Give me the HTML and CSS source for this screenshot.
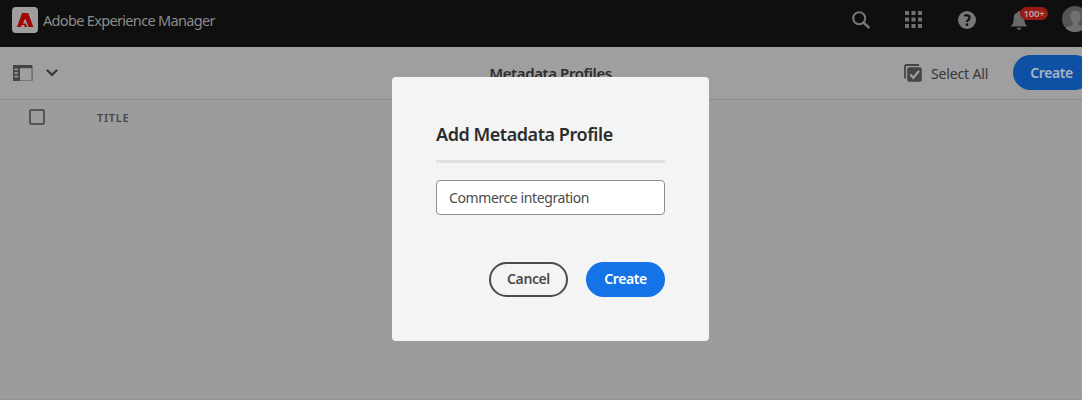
FILE: index.html
```html
<!DOCTYPE html>
<html lang="en">
<head>
<meta charset="utf-8">
<title>Metadata Profiles</title>
<link rel="stylesheet" href="styles.css">
</head>
<body>
<header class="shell">
  <div class="brand">
    <svg class="logo" width="26" height="26" viewBox="0 0 26 26"><rect width="26" height="26" rx="4" fill="#9e9e9e"/><path d="M10 6h6.200L21.400 20h-4c-.5 0-.8-.2-1-.6L13.100 11.400 11 16.500h2.300c.3 0 .5.100.6.400l1.300 3.100h-2.400l-.9-2H9.800l-.8 2H5z" fill="#a20600"/></svg>
    <span class="brand-name">Adobe Experience Manager</span>
  </div>
  <div class="shell-icons">
    <svg width="18" height="18" viewBox="0 0 18 18" fill="none" stroke="#777"><circle cx="7.200" cy="7.200" r="6" stroke-width="2"/><path d="M11.600 11.600L16.500 16.300" stroke-width="2.600" stroke-linecap="round"/></svg>
    <svg class="apps" width="18" height="18" viewBox="0 0 18 18" fill="#707070"><path d="M0 0h4v4H0zM6.500 0h4v4h-4zM13 0h4v4h-4zM0 6.500h4v4H0zM6.500 6.500h4v4h-4zM13 6.500h4v4h-4zM0 13h4v4H0zM6.500 13h4v4h-4zM13 13h4v4h-4z"/></svg>
    <svg class="help" width="18" height="18" viewBox="0 0 18 18"><circle cx="9" cy="9" r="9" fill="#777"/><path d="M6.300 5C7.400 3.900 11.600 3.800 11.600 6.700C11.600 8.800 9 9 9 11.100" fill="none" stroke="#101010" stroke-width="2.100"/><circle cx="9" cy="13.700" r="1.350" fill="#101010"/></svg>
    <div class="alerts">
      <svg width="16" height="19" viewBox="0 0 16 19" fill="#696969"><path d="M8 0c1 0 1.500.6 1.500 1.600C12.300 2.300 13.300 4.500 13.300 7c0 4.300.7 5.800 2.300 7.300.4.600.2 1.200-.4 1.200H.800c-.6 0-.8-.6-.4-1.200C2 12.800 2.700 11.300 2.700 7c0-2.500 1-4.700 3.800-5.400C6.500.6 7 0 8 0zM5.700 16.700h4.600C9.800 19.400 6.200 19.400 5.700 16.700z"/></svg>
      <span class="badge">100+</span>
    </div>
    <svg class="avatar" width="26" height="26" viewBox="0 0 26 26"><defs><clipPath id="face"><circle cx="13" cy="13" r="13"/></clipPath></defs><g clip-path="url(#face)"><rect width="26" height="26" fill="#555"/><path d="M13.500 4.500c3.500 0 5.400 2.500 5.200 6-.1 2.500-1 4.500-2.400 5.600v3L23 21.500V26H4v-4.500l6.700-2.400v-3c-1.400-1.100-2.300-3.100-2.400-5.600-.2-3.500 1.700-6 5.200-6z" fill="#707070"/></g></svg>
  </div>
</header>
<div class="toolbar">
  <div class="rail">
    <svg width="20" height="16" viewBox="0 0 20 16"><path d="M0 0h19.500v16H0z" fill="#454545"/><path d="M7 3.200h11.700v12H7z" fill="#a0a0a0"/><path d="M1.300 4.500h3.800M1.300 8h3.800M1.300 11.500h3.800" stroke="#a0a0a0" stroke-width="1.300"/><path d="M7 15.500h12.500M19.100 3v13" stroke="#777" stroke-width="1"/></svg>
    <svg width="12" height="8" viewBox="0 0 12 8"><path d="M1.500 1.500L6 5.900l4.500-4.400" fill="none" stroke="#3a3a3a" stroke-width="2.400" stroke-linecap="round" stroke-linejoin="round"/></svg>
  </div>
  <h1 class="page-title"><span>Metadata Profiles</span></h1>
  <div class="actions">
    <svg width="18" height="18" viewBox="0 0 18 18"><path d="M1 14.500V2.500Q1 1 2.500 1H15" fill="none" stroke="#454545" stroke-width="1.800"/><rect x="3.200" y="3.200" width="14.600" height="14.600" rx="2" fill="#454545"/><path d="M6.300 10.500l3 3.300 5.800-7" fill="none" stroke="#9e9e9e" stroke-width="2.200"/></svg>
    <span class="select-all">Select All</span>
    <button class="btn page-create"><span>Create</span></button>
  </div>
</div>
<main class="list-head">
  <span class="checkbox"></span>
  <span class="column">TITLE</span>
</main>
<section class="dialog">
  <h2 class="dialog-title"><span>Add Metadata Profile</span></h2>
  <div class="field"><span>Commerce integration</span></div>
  <div class="dialog-actions">
    <button class="btn cancel"><span>Cancel</span></button>
    <button class="btn confirm"><span>Create</span></button>
  </div>
</section>
</body>
</html>
```

FILE: styles.css
```css
* { box-sizing: border-box; }
body {
  margin: 0;
  width: 1082px;
  height: 400px;
  overflow: hidden;
  position: relative;
  background: #9c9c9c;
  border-bottom: 1px solid #969394;
  font-family: "Noto Sans", "Open Sans", sans-serif;
  font-size: 14px;
}
svg { display: block; flex: none; }
span { white-space: nowrap; }
.shell {
  height: 47px;
  background: #0f0f0f;
  display: flex;
  justify-content: space-between;
  padding-left: 12px;
}
.brand { display: flex; gap: 5px; padding-top: 7px; }
.brand-name { color: #8b8b8b; font-size: 14.5px; line-height: 26px; letter-spacing: -0.67px; }
.shell-icons { display: flex; width: 230px; flex: none; padding-top: 11px; }
.apps { margin-left: 35px; }
.help { margin-left: 35px; }
.alerts { position: relative; margin-left: 35px; width: 16px; }
.badge {
  position: absolute;
  left: 9px;
  top: -4px;
  width: 28px;
  height: 13px;
  border-radius: 7px;
  background: #991b18;
  color: #b5a5a5;
  font-size: 9.5px;
  font-weight: 600;
  line-height: 13px;
  letter-spacing: -0.2px;
  text-align: center;
}
.avatar { margin: -5px 0 0 35px; }
.toolbar {
  height: 53px;
  border-bottom: 1px solid #8d8d8d;
  background: #9f9f9f;
  display: grid;
  grid-template-columns: 392px 317px 373px;
}
.rail { display: flex; align-items: center; gap: 13px; padding: 0 0 1px 13px; }
.page-title {
  margin: 0;
  text-align: center;
  color: #2d2d2d;
  font-size: 15px;
  font-weight: 600;
  line-height: 52px;
  letter-spacing: -0.4px;
}
.actions { display: flex; align-items: center; padding-left: 195px; }
.select-all { width: 82px; margin-left: 9px; color: #363636; letter-spacing: -0.15px; flex: none; }
.btn {
  flex: none;
  width: 79px;
  height: 35px;
  padding: 0 0 2px;
  border: 0;
  border-radius: 18px;
  font: 600 14px "Noto Sans", "Open Sans", sans-serif;
  letter-spacing: -0.4px;
}
.page-create { align-self: flex-start; margin-top: 8px; padding: 0 2px 0 0; background: #0d50a4; color: #a9b4c4; }
.list-head { display: flex; padding: 9px 29px; gap: 52px; align-items: flex-start; }
.checkbox { width: 16px; height: 16px; border: 2px solid #555; border-radius: 2px; }
.column { color: #474747; font-size: 11px; font-weight: 600; line-height: 18px; letter-spacing: .75px; }
.dialog {
  position: absolute;
  left: 392px;
  top: 77px;
  width: 317px;
  height: 264px;
  padding: 44px;
  border-radius: 4px;
  background: #f4f4f4;
}
.dialog-title {
  margin: 0;
  height: 42px;
  border-bottom: 3px solid #e1e1e1;
  color: #2c2c2c;
  font-size: 18px;
  font-weight: 600;
  line-height: 26px;
  letter-spacing: -0.45px;
}
.field {
  height: 35px;
  margin-top: 17px;
  padding-left: 12px;
  border: 1px solid #8e8e8e;
  border-radius: 4px;
  background: #fff;
  color: #4b4b4b;
  font-size: 14px;
  line-height: 34px;
  letter-spacing: -0.4px;
}
.dialog-actions { display: flex; justify-content: flex-end; gap: 18px; margin-top: 47px; }
.cancel { border: 2px solid #4b4b4b; background: #f4f4f4; color: #4b4b4b; }
.confirm { background: #1473e6; color: #fff; }
```
